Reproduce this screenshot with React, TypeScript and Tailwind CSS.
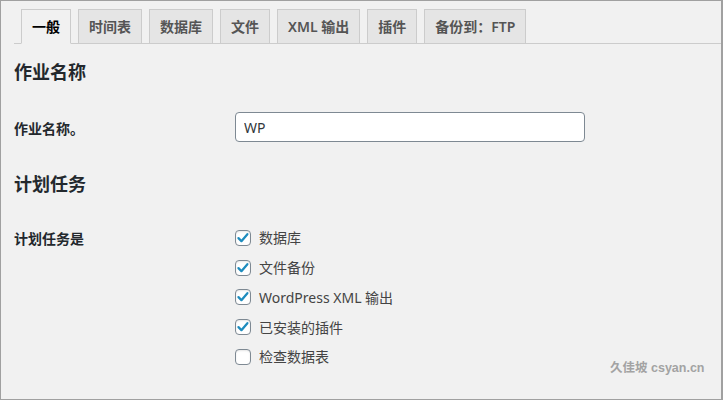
import { useState } from "react";

const tabs = ["一般", "时间表", "数据库", "文件", "XML 输出", "插件", "备份到：FTP"];

const jobTypes = [
  { id: "db", label: "数据库", checked: true },
  { id: "file", label: "文件备份", checked: true },
  { id: "wpexp", label: "WordPress XML 输出", checked: true },
  { id: "wpplugin", label: "已安装的插件", checked: true },
  { id: "dbcheck", label: "检查数据表", checked: false },
];

const font = "font-['Noto_Sans','Noto_Sans_CJK_SC',sans-serif]";

function Checkbox({ checked, onToggle }: { checked: boolean; onToggle: () => void }) {
  return (
    <button
      type="button"
      onClick={onToggle}
      className="flex h-4 w-4 shrink-0 items-center justify-center rounded-[4px] border border-[#7e8993] bg-white shadow-[inset_0_1px_2px_rgba(0,0,0,0.1)]"
    >
      {checked && (
        <svg viewBox="0 0 16 16" className="h-[14px] w-[14px]">
          <path
            d="M2.8 8.2 L6.2 11.6 L13 3.6"
            fill="none"
            stroke="#1e8cbe"
            strokeWidth="2.6"
            strokeLinecap="round"
            strokeLinejoin="round"
          />
        </svg>
      )}
    </button>
  );
}

export default function App() {
  const [active, setActive] = useState(0);
  const [name, setName] = useState("WP");
  const [checks, setChecks] = useState(jobTypes.map((j) => j.checked));

  return (
    <div
      className={`relative h-[400px] w-[723px] overflow-hidden border-t border-b border-l border-r-2 border-[#a0a0a0] bg-[#f1f1f1] pl-[13px] pt-2 ${font}`}
    >
      {/* Tabs */}
      <div className="flex h-[35px] items-end border-b border-[#cccccc]">
        {tabs.map((tab, i) => (
          <button
            key={tab}
            onClick={() => setActive(i)}
            className={`-mb-px ml-[7px] h-[35px] border border-[#cccccc] px-[10px] text-[14px] font-semibold leading-[24px] ${
              i === active
                ? "border-b-[#f1f1f1] bg-[#f1f1f1] text-black"
                : "bg-[#e5e5e5] text-[#555555]"
            }`}
          >
            {tab}
          </button>
        ))}
      </div>

      {/* Job name */}
      <h2 className="mt-4 h-6 text-[18px] font-semibold leading-6 text-[#23282d]">作业名称</h2>
      <div className="mt-7 grid grid-cols-[221px_350px] items-center">
        <label className="pt-[3px] text-[14px] font-semibold text-[#23282d]">作业名称。</label>
        <input
          value={name}
          onChange={(e) => setName(e.target.value)}
          className="h-[30px] rounded-[4px] border border-[#7e8993] bg-white px-2 text-[14px] text-[#32373c] outline-none"
        />
      </div>

      {/* Schedule */}
      <h2 className="mt-[30px] h-6 text-[18px] font-semibold leading-6 text-[#23282d]">计划任务</h2>
      <div className="mt-[27px] grid grid-cols-[221px_1fr]">
        <div className="flex h-[30px] items-center text-[14px] font-semibold text-[#23282d]">计划任务是</div>
        <div className="flex flex-col">
          {jobTypes.map((job, i) => (
            <label key={job.id} className="flex h-[29.75px] items-center gap-2 text-[14px] text-[#444444]">
              <Checkbox
                checked={checks[i]}
                onToggle={() => setChecks((c) => c.map((v, k) => (k === i ? !v : v)))}
              />
              <span>{job.label}</span>
            </label>
          ))}
        </div>
      </div>

      {/* Watermark */}
      <div className="absolute left-[609px] top-[358px] font-['Liberation_Sans','Noto_Sans_CJK_SC',sans-serif] text-[12.5px] font-bold text-[#a3a3a3]">
        久佳坡 csyan.cn
      </div>
    </div>
  );
}
